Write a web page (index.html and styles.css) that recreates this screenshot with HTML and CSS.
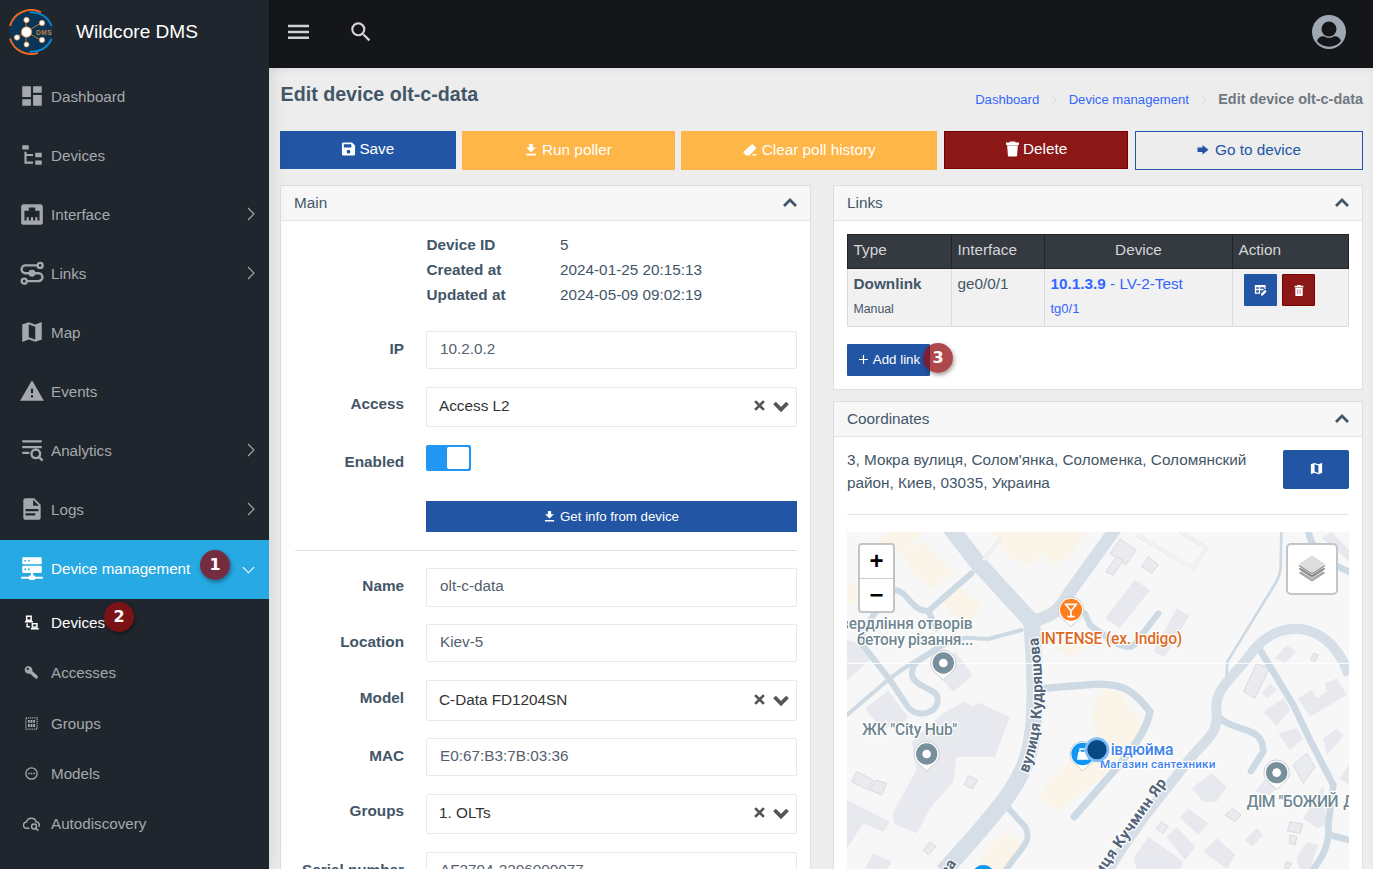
FILE: index.html
```html
<!DOCTYPE html>
<html lang="en">
<head>
<meta charset="utf-8">
<title>Wildcore DMS</title>
<link rel="stylesheet" href="styles.css">
</head>
<body>
<svg class="defs" width="0" height="0">
  <symbol id="dash" viewBox="0 0 24 24"><path d="M3 13h8V3H3v10zm0 8h8v-6H3v6zm10 0h8V11h-8v10zm0-18v6h8V3h-8z"/></symbol>
  <symbol id="tree" viewBox="0 0 24 24"><path d="M3 3h6v4H3V3m12 7h6v4h-6v-4m0 7h6v4h-6v-4m-2-4H7v5h6v2H5V9h2v2h6v2z"/></symbol>
  <symbol id="eth" viewBox="0 0 24 24"><path d="M7 15h2v3h2v-3h2v3h2v-3h2v3h2V9h-4V6H9v3H5v9h2v-3M4.400 3h15.200A2.400 2.400 0 0 1 22 5.400v14.200a2.400 2.400 0 0 1-2.400 2.400H4.400A2.400 2.400 0 0 1 2 19.600V5.400A2.400 2.400 0 0 1 4.400 3z"/></symbol>
  <symbol id="route" viewBox="0 0 24 24"><g fill="none" stroke="currentColor" stroke-width="2.200"><path d="M17.500 5H6a3.200 3.200 0 0 0 0 7.200h12a3.600 3.600 0 0 1 0 7.300H6.500"/><circle cx="19.500" cy="5" r="2.300"/><circle cx="4.800" cy="19.500" r="2.300"/></g><circle cx="12" cy="12.200" r="3.200"/></symbol>
  <symbol id="map" viewBox="0 0 24 24"><path d="M20.500 3l-.16.03L15 5.100 9 3 3.360 4.900c-.21.07-.36.25-.36.48V20.500c0 .28.22.5.5.5l.16-.03L9 18.900l6 2.100 5.640-1.900c.21-.07.36-.25.36-.48V3.500c0-.28-.22-.5-.5-.5zM15 19l-6-2.110V5l6 2.110V19z"/></symbol>
  <symbol id="warn" viewBox="0 0 24 24"><path d="M1 21h22L12 2 1 21zm12-3h-2v-2h2v2zm0-4h-2v-4h2v4z"/></symbol>
  <symbol id="txtsearch" viewBox="0 0 24 24"><path d="M3 3h18v2H3zM3 8.300h18v2H3zM3 13.600h6.500v2H3z"/><g fill="none" stroke="currentColor" stroke-width="2.200"><circle cx="15.500" cy="15.500" r="4"/><path d="M18.300 18.300l3.500 3.500"/></g></symbol>
  <symbol id="doc" viewBox="0 0 24 24"><path d="M13 9h5.500L13 3.500V9M6 2h8l6 6v12a2 2 0 0 1-2 2H6a2 2 0 0 1-2-2V4c0-1.110.89-2 2-2m9 16v-2H6v2h9m3-4v-2H6v2h12z"/></symbol>
  <symbol id="server" viewBox="0 0 24 24"><path fill-rule="evenodd" d="M4 2h16a1 1 0 0 1 1 1v4.500a1 1 0 0 1-1 1H4a1 1 0 0 1-1-1V3a1 1 0 0 1 1-1zm1 2.500v1.500h1.500V4.500zm3.500 0v1.500H10V4.500zM4 10h16a1 1 0 0 1 1 1v4.500a1 1 0 0 1-1 1h-7V19h1a1 1 0 0 1 1 1h7v2h-7a1 1 0 0 1-1 1h-4a1 1 0 0 1-1-1H2v-2h7a1 1 0 0 1 1-1h1v-2.500H4a1 1 0 0 1-1-1V11a1 1 0 0 1 1-1zm1 2.500V14h1.500v-1.500zm3.500 0V14H10v-1.500z"/></symbol>
  <symbol id="pcs" viewBox="0 0 16 16"><g fill="none" stroke="currentColor" stroke-width="1.600"><rect x="2.800" y="1.300" width="4.800" height="4.300"/><path d="M1 7.200h8.500M3.300 9v3.400h3"/><rect x="8.900" y="9.300" width="4.900" height="3.600"/><path d="M7.300 14.700h8.500"/></g></symbol>
  <symbol id="key" viewBox="0 0 16 16"><path fill-rule="evenodd" d="M5 1.200a4 4 0 1 0 .9 7.800l1.100 1h1.400v1.400l1.200.3.300 1.200 1.500.3.300 1.300h2.900v-2.700L8.800 6.300A4 4 0 0 0 5 1.200zM4 3a1.200 1.200 0 1 1 0 2.400A1.200 1.200 0 0 1 4 3z"/></symbol>
  <symbol id="grp" viewBox="0 0 16 16"><path fill="none" stroke="currentColor" stroke-width="1.300" stroke-dasharray="1.300 .9" d="M2 2h12v12H2z"/><path d="M4.200 4.200h2v3h-2zM7 4.200h2v3H7zM9.800 4.200h2v3h-2zM4.200 8.600h2v3h-2zM7 8.600h2v3H7zM9.800 8.600h2v3h-2z"/></symbol>
  <symbol id="dots" viewBox="0 0 16 16"><circle cx="8" cy="8" r="6" fill="none" stroke="currentColor" stroke-width="1.400"/><path d="M4.500 7.200h1.600v1.600H4.500zM7.200 7.200h1.600v1.600H7.200zM9.900 7.200h1.600v1.600H9.900z"/></symbol>
  <symbol id="cloud" viewBox="0 0 16 16"><g fill="none" stroke="currentColor" stroke-width="1.400"><path d="M6 12.500H3.600a3 3 0 0 1-.3-6A4.700 4.700 0 0 1 12.400 6.600 2.700 2.700 0 0 1 14.700 11"/><circle cx="10.400" cy="10.800" r="2.300"/><path d="M12.200 12.600l2.200 2.200"/></g></symbol>
  <symbol id="search" viewBox="0 0 24 24"><path d="M9.500 3A6.500 6.500 0 0 1 16 9.500c0 1.610-.59 3.090-1.560 4.230l.27.27h.79l5 5-1.500 1.500-5-5v-.79l-.27-.27A6.516 6.516 0 0 1 9.500 16 6.500 6.500 0 0 1 3 9.500 6.500 6.500 0 0 1 9.500 3m0 2C7 5 5 7 5 9.500S7 14 9.500 14 14 12 14 9.500 12 5 9.500 5z"/></symbol>
  <symbol id="right" viewBox="0 0 8 14"><path fill="none" stroke="currentColor" stroke-width="1.100" d="M1 1l6 6-6 6"/></symbol>
  <symbol id="down" viewBox="0 0 14 8"><path fill="none" stroke="currentColor" stroke-width="1.200" d="M1 1l6 6 6-6"/></symbol>
  <symbol id="up" viewBox="0 0 14 9"><path fill="none" stroke="currentColor" stroke-width="2.700" d="M1 8l6-6 6 6"/></symbol>
  <symbol id="chev" viewBox="0 0 16 12"><path fill="none" stroke="currentColor" stroke-width="3.800" d="M1.500 2L8 8.500 14.500 2"/></symbol>
  <symbol id="x" viewBox="0 0 12 12"><path fill="none" stroke="currentColor" stroke-width="2.900" d="M1.200 1.200l9.600 9.600M10.800 1.200l-9.600 9.600"/></symbol>
  <symbol id="save" viewBox="0 0 16 16"><path fill-rule="evenodd" d="M2.500 1h9.300L15 4.200v9.300a1.500 1.500 0 0 1-1.500 1.500h-11A1.500 1.500 0 0 1 1 13.500v-11A1.500 1.500 0 0 1 2.500 1zM3 3v3.300h8V3zm5 5.800a2 2 0 1 0 0 4 2 2 0 0 0 0-4z"/></symbol>
  <symbol id="dl" viewBox="0 0 12 12"><path d="M4.200 0h3.600v3.600h3L6 8.200 1.200 3.600h3zM1 9.800h10v1.700H1z"/></symbol>
  <symbol id="eraser" viewBox="0 0 14 12"><path d="M8.300.7a1.300 1.300 0 0 1 1.800 0l2.600 2.600a1.300 1.300 0 0 1 0 1.800L7.500 10.200 6.300 11.400H3L.8 9.200a1.300 1.300 0 0 1 0-1.800zM10 9.900h3.500v1.500H8.500z"/></symbol>
  <symbol id="trash" viewBox="0 0 14 16"><path d="M4.500.5h5l.7 1H13.500v2.400H.5V1.500h3.300zM1.700 5h10.600l-.7 9.500a1 1 0 0 1-1 1H3.400a1 1 0 0 1-1-1z"/><path opacity=".7" d="M1.500 3.900h11V5h-11z"/></symbol>
  <symbol id="arrow" viewBox="0 0 12 10"><path d="M.5 2.500h5V0l6 4.800-6 4.800V7.100h-5z"/></symbol>
</svg>
<div class="app">
  <aside class="side">
    <div class="brand">
      <svg class="logo" viewBox="0 0 46 46">
        <circle cx="23" cy="23" r="21.500" fill="#0b3556"/>
        <g fill="none" stroke-width="1.900"><path stroke="#f26a1b" d="M2 17A21.800 21.800 0 0 1 33 3.400M2 29.500A21.800 21.800 0 0 0 30 43.800"/><path stroke="#0d86cf" d="M22 3.500A20.500 20.500 0 0 1 43.600 17M43.600 30A21 21 0 0 1 22 42.500"/></g>
        <path stroke="#d98a35" stroke-width=".8" fill="none" d="M18 23V11M18 23l15-9M18 23l-10 5.500M18 23v12M18 23l15 8"/>
        <g fill="#fff" stroke="#e88a30" stroke-width=".7"><circle cx="18.500" cy="23" r="5.200"/><circle cx="18.500" cy="11" r="2.700"/><circle cx="34" cy="14" r="2.700"/><circle cx="9" cy="28.500" r="2.700"/><circle cx="18.500" cy="35.500" r="2.500"/><circle cx="34" cy="31" r="2.700"/></g>
        <text class="logo-txt" x="28" y="25.500">DMS</text>
      </svg>
      <span class="brand-name">Wildcore DMS</span>
    </div>
    <nav>
      <a class="item"><svg class="ico"><use href="#dash"/></svg>Dashboard</a>
      <a class="item"><svg class="ico"><use href="#tree"/></svg>Devices</a>
      <a class="item"><svg class="ico"><use href="#eth"/></svg>Interface<svg class="more"><use href="#right"/></svg></a>
      <a class="item"><svg class="ico"><use href="#route"/></svg>Links<svg class="more"><use href="#right"/></svg></a>
      <a class="item"><svg class="ico"><use href="#map"/></svg>Map</a>
      <a class="item"><svg class="ico"><use href="#warn"/></svg>Events</a>
      <a class="item"><svg class="ico"><use href="#txtsearch"/></svg>Analytics<svg class="more"><use href="#right"/></svg></a>
      <a class="item"><svg class="ico"><use href="#doc"/></svg>Logs<svg class="more"><use href="#right"/></svg></a>
      <a class="item active"><svg class="ico"><use href="#server"/></svg>Device management<svg class="more-down"><use href="#down"/></svg><b class="badge b1">1</b></a>
      <div class="sub">
        <a class="subitem current"><svg class="sico"><use href="#pcs"/></svg>Devices<b class="badge b2">2</b></a>
        <a class="subitem"><svg class="sico"><use href="#key"/></svg>Accesses</a>
        <a class="subitem"><svg class="sico"><use href="#grp"/></svg>Groups</a>
        <a class="subitem"><svg class="sico"><use href="#dots"/></svg>Models</a>
        <a class="subitem"><svg class="sico wide"><use href="#cloud"/></svg>Autodiscovery</a>
      </div>
    </nav>
  </aside>
  <div class="page">
    <header class="top">
      <svg class="burger" viewBox="0 0 21 16"><path d="M0 .8h21v2.500H0zM0 6.700h21v2.500H0zM0 12.600h21v2.500H0z"/></svg>
      <svg class="find"><use href="#search"/></svg>
      <svg class="user" viewBox="0 0 34 34"><circle cx="17" cy="17" r="17" fill="#a0a8b3"/><circle cx="17" cy="14" r="7.500" fill="#15161a"/><path fill="#15161a" d="M5 26c1-3.500 4-5.200 7-4.800 3.500 2.200 6.500 2.200 10 0 3-.4 6 1.300 7 4.800-5.500 7.600-18.500 7.600-24 0z"/></svg>
    </header>
    <main class="main">
      <div class="heading">
        <h1>Edit device olt-c-data</h1>
        <div class="crumbs"><a>Dashboard</a><svg class="sep"><use href="#right"/></svg><a>Device management</a><svg class="sep"><use href="#right"/></svg><b>Edit device olt-c-data</b></div>
      </div>
      <div class="actions">
        <button class="btn blue short"><svg class="i16"><use href="#save"/></svg>Save</button>
        <button class="btn amber"><svg class="i12"><use href="#dl"/></svg>Run poller</button>
        <button class="btn amber"><svg class="i14"><use href="#eraser"/></svg>Clear poll history</button>
        <button class="btn red short"><svg class="i16"><use href="#trash"/></svg>Delete</button>
        <button class="btn outline"><svg class="i12"><use href="#arrow"/></svg>Go to device</button>
      </div>
      <div class="cols">
        <section class="panel">
          <div class="phead">Main<svg class="fold"><use href="#up"/></svg></div>
          <div class="form">
            <dl class="info"><dt>Device ID</dt><dd>5</dd><dt>Created at</dt><dd>2024-01-25 20:15:13</dd><dt>Updated at</dt><dd>2024-05-09 09:02:19</dd></dl>
            <div class="row"><label>IP</label><div class="input">10.2.0.2</div></div>
            <div class="row"><label class="high">Access</label><div class="select">Access L2<svg class="clear"><use href="#x"/></svg><svg class="caret"><use href="#chev"/></svg></div></div>
            <div class="row"><label class="high">Enabled</label><div class="toggle"><i></i></div></div>
            <div class="row get"><span></span><button class="btn blue small"><svg class="i11"><use href="#dl"/></svg>Get info from device</button></div>
            <hr>
            <div class="row"><label>Name</label><div class="input tall">olt-c-data</div></div>
            <div class="row snug"><label>Location</label><div class="input">Kiev-5</div></div>
            <div class="row"><label>Model</label><div class="select tall">C-Data FD1204SN<svg class="clear"><use href="#x"/></svg><svg class="caret"><use href="#chev"/></svg></div></div>
            <div class="row snug"><label>MAC</label><div class="input">E0:67:B3:7B:03:36</div></div>
            <div class="row"><label class="high">Groups</label><div class="select">1. OLTs<svg class="clear"><use href="#x"/></svg><svg class="caret"><use href="#chev"/></svg></div></div>
            <div class="row"><label>Serial number</label><div class="input">AF2704-2206000077</div></div>
          </div>
        </section>
        <div class="right">
          <section class="panel">
            <div class="phead">Links<svg class="fold"><use href="#up"/></svg></div>
            <div class="links">
              <table>
                <colgroup><col class="c1"><col class="c2"><col class="c3"><col class="c4"></colgroup>
                <thead><tr><th>Type</th><th>Interface</th><th class="mid">Device</th><th>Action</th></tr></thead>
                <tbody><tr>
                  <td><b>Downlink</b><br><small>Manual</small></td>
                  <td>ge0/0/1</td>
                  <td><a><b>10.1.3.9</b> - LV-2-Test</a><br><small><a>tg0/1</a></small></td>
                  <td><div class="acts">
                    <span class="sq"><svg width="13" height="12" viewBox="0 0 13 12"><g fill="none" stroke="#fff" stroke-width="1.300"><path d="M11 5V1.700H1.500v7.500H6M1.500 5.500h8M5.500 2v7M1.500 2.500H11"/></g><path fill="#fff" d="M7 11.500V9.700l4-4 1.700 1.700-4 4z"/></svg></span>
                    <span class="sq del"><svg width="10" height="11" viewBox="0 0 10 11"><path fill="#fff" d="M3.500 0h3l.5.700h2.300v1.800H.7V.7H3zM1.300 3h7.400v7.200a.8.800 0 0 1-.8.800H2.100a.8.800 0 0 1-.8-.8z"/><path stroke="#b66" stroke-width=".8" d="M3.800 4.200v5M6.200 4.200v5"/></svg></span>
                  </div></td>
                </tr></tbody>
              </table>
              <button class="btn blue add"><svg width="9" height="9" viewBox="0 0 9 9"><path stroke="#fff" stroke-width="1.200" d="M4.500 0v9M0 4.500h9"/></svg>Add link<b class="badge b3">3</b></button>
            </div>
          </section>
          <section class="panel coord">
            <div class="phead">Coordinates<svg class="fold"><use href="#up"/></svg></div>
            <div class="coords">
              <div class="addr"><p>3, Мокра вулиця, Солом'янка, Соломенка, Соломянский район, Киев, 03035, Украина</p><span class="mapbtn"><svg class="i14s"><use href="#map"/></svg></span></div>
              <div class="map">
                <svg class="tiles" viewBox="21 21 1506 1011" preserveAspectRatio="none">
                  <defs><g id="pin"><path fill="#fff" stroke="#c8cdd2" stroke-width="3" d="M0-38A38 38 0 0 0-38 0C-38 18-28 26-18 34L0 51 18 34C28 26 38 18 38 0A38 38 0 0 0 0-38z"/></g><g id="place"><use href="#pin"/><circle r="32" fill="#78909c"/><circle r="13" fill="#fff"/></g></defs>
                  <rect x="21" y="21" width="1506" height="1011" fill="#f7f7f7"/>
                  <!-- buildings: commercial -->
                  <g fill="#faf5e8"><path d="M100 60L150 21H250L200 65L255 55L340 140L275 190L215 140L190 85L140 75z"/><path d="M450 21H735L690 95L640 122L610 85L560 122L500 90z"/><path d="M305 210L350 175L425 240L400 285L330 270z"/><path d="M21 160L60 200L40 235H21z"/><path d="M610 790L700 700L760 690L790 700L860 640L850 700L780 760L655 860L600 820z"/><path d="M757 560L765 520L800 490L850 510L860 545L905 580L890 640L850 675L770 710z"/><path d="M500 920L545 960L500 1032H405L440 975z"/><path d="M640 370L700 330L750 360L690 395z"/></g>
                  <!-- buildings: residential -->
                  <g fill="#e8e9ee"><path d="M21 345L70 360L90 405L21 465z"/><path d="M345 380L398 450L340 500L285 440z"/><path d="M75 550L145 497L205 575L175 610L150 600L130 620z"/><path d="M160 860L230 735L215 650L310 565L370 530L400 545L415 533L510 575L465 695H350L340 770L270 850L230 925L160 895z"/><path d="M21 825L150 890L130 920L70 895L21 970z"/><path d="M100 985L155 1010L140 1032H75z"/><path d="M795 280L885 165L930 195L840 310z"/><path d="M940 380L1010 250L1048 272L975 395z"/><path d="M1055 790L1115 745L1160 785L1130 830L1090 830z"/><path d="M1020 880L1045 850L1105 895L1075 930z"/><path d="M880 1000L925 935L1030 1010L1020 1032H890z"/><path d="M980 935L1010 905L1065 965L1035 1005z"/><path d="M1090 980L1130 940L1187 990L1160 1032z"/><path d="M1215 945L1250 910L1270 930L1235 965z"/><path d="M1270 560L1330 520L1352 555L1310 602z"/><path d="M1315 625L1370 610L1390 640L1350 675z"/><path d="M1265 505L1290 475L1310 495L1280 520z"/><path d="M1373 520L1415 495L1430 520L1460 500L1455 475L1490 460L1520 510L1410 575z"/><path d="M1450 640L1490 610L1510 630L1480 670L1460 690z"/><path d="M1390 880L1450 780L1460 900L1430 910z"/><path d="M1370 1000L1400 950L1435 960L1410 1032H1380z"/><path d="M1245 800L1290 745L1335 760L1290 810z"/><path d="M1305 400L1340 360L1370 380L1335 415z"/><path d="M1445 40L1475 21L1527 75V108z"/><path d="M1497 760L1527 720V780z"/></g>
                  <g fill="#e9ebee" stroke="#d9dbe4" stroke-width="3"><path d="M50 740L100 765L85 795L35 770z"/><path d="M108 765L140 775L125 810L90 795z"/><path d="M385 752L412 765L398 792L372 780z"/><path d="M270 950L288 965L265 990L250 975z"/><path d="M840 42L888 75L858 120L810 85z"/><path d="M830 95L850 105L820 150L797 140z"/><path d="M925 95L955 120L935 145L905 125z"/><path d="M1250 415L1288 430L1245 520L1210 500z"/><path d="M1360 720L1400 685L1425 725L1390 775z"/><path d="M1178 850L1203 870L1185 890L1155 870z"/><path d="M965 890L985 905L968 925L948 910z"/><path d="M1350 890L1388 897L1380 925L1342 918z"/><path d="M1350 930L1370 935L1365 960L1348 955z"/><path d="M1420 385L1435 390L1425 410L1413 405z"/><path d="M1340 1010L1355 1015L1345 1032L1333 1030z"/></g>
                  <!-- streets -->
                  <g fill="none" stroke="#cdd9e3" stroke-linecap="round" stroke-linejoin="round">
                    <path stroke-width="18" d="M155 195C205 190 210 260 265 258L395 145M265 258L290 310M110 255L75 310L60 350L150 465L200 540C230 590 310 560 290 510C265 480 190 480 225 415L320 350"/>
                    <path stroke-width="12" d="M545 315L445 342L380 338C330 345 230 400 150 460L21 570"/>
                    <path stroke-width="18" d="M505 850L555 905C580 950 540 970 500 1032M955 265L890 350C870 385 830 360 750 300L735 265"/>
                    <path stroke-width="8" d="M1324 21L1322 130C1320 150 1310 170 1300 185L1162 410L1160 450"/>
                    <path stroke-width="22" d="M612 490L760 478C860 472 890 510 930 560C920 620 870 680 820 740L703 875"/>
                    <path stroke-width="20" d="M1262 378L1360 540L1410 645L1480 780L1465 900C1470 960 1445 1000 1420 1032M1470 930L1527 945M1140 580C1190 625 1270 600 1270 680L1233 738M1405 21C1420 90 1480 120 1527 140"/>
                  </g>
                  <g fill="none" stroke="#d6dfe7" stroke-linejoin="round"><path stroke-width="50" d="M325 0L410 110L575 290C585 440 590 560 575 640C560 780 440 890 310 1040"/><path stroke-width="38" d="M575 290C650 270 660 250 690 200L835 0"/><path stroke-width="30" d="M785 1070C860 940 940 840 1020 740C1090 640 1135 640 1130 560C1120 490 1180 460 1245 370C1330 275 1470 290 1527 450"/></g>
                  <g fill="none" stroke="#e4e6ea" stroke-width="10"><path d="M430 105L485 38"/><path d="M890 30L1060 130L1100 70L1015 15"/></g>
                  <g fill="none" stroke="#f7f7f7" stroke-width="5"><path d="M430 105L485 38"/><path d="M890 30L1060 130L1100 70L1015 15"/></g>
                  <path stroke="#fff" stroke-width="3" d="M21 415H1527"/>
                  <g class="lbl gray"><text x="0" y="312" textLength="398">вердління отворів</text><text x="50" y="359" textLength="350">бетону різання...</text><text x="66" y="631" textLength="286">ЖК "City Hub"</text><text x="1220" y="845" textLength="276">ДІМ "БОЖИЙ</text><text x="1510" y="845">Д</text></g>
                  <text class="lbl orange" x="602" y="356" textLength="425">INTENSE (ex. Indigo)</text>
                  <g class="lbl road"><path id="r1" fill="none" stroke="none" d="M564 745C606 640 620 520 594 330"/><text textLength="414"><textPath href="#r1">вулиця Кудряшова</textPath></text><text transform="translate(740 1117) rotate(-55)" textLength="420">вулиця Кучмин Яр</text><text transform="translate(318 1062) rotate(-55)" x="-20">ова</text></g>
                  <use href="#place" x="310" y="414"/><use href="#place" x="260" y="687"/><use href="#place" x="1310" y="743"/>
                  <use href="#pin" x="693" y="254"/><circle cx="693" cy="254" r="33" fill="#ff7f1f"/><path fill="none" stroke="#fff" stroke-width="5" d="M677 238H709L693 258zM693 258V275M682 275H704"/>
                  <use href="#pin" x="728" y="687"/><circle cx="728" cy="687" r="34" fill="#1196f5"/><path fill="#fff" d="M715 680H742L746 704H711z"/><path fill="none" stroke="#fff" stroke-width="4" d="M720 682V672H736V682"/>
                  <circle cx="430" cy="1055" r="35" fill="#1196f5"/>
                  <text class="lbl azure" x="812" y="690" textLength="188">івдюйма</text><text class="lbl azure sm" x="780" y="729" textLength="346">Магазин сантехники</text>
                  <circle cx="771" cy="674" r="33" fill="#054a82" stroke="#7fbdf7" stroke-width="8"/>
                </svg>
                <div class="zoomer"><span>+</span><span>−</span></div>
                <div class="layers"><svg width="30" height="28" viewBox="0 0 30 28"><g stroke="#fff" stroke-width=".7"><path fill="#aaa" d="M1 18l14-8 14 8-14 9z"/><path fill="#888" d="M1 14l14-8 14 8-14 9z"/><path fill="#777" d="M1 11l14-8 14 8-14 8.500z"/></g><path fill="#ddd" d="M1 9.500L15 .5l14 9-14 8.800z"/></svg></div>
              </div>
            </div>
          </section>
        </div>
      </div>
    </main>
  </div>
</div>
</body>
</html>
```
FILE: styles.css
```css
* { box-sizing: border-box; }
body { margin: 0; font: 15.3px/23px "Liberation Sans", Arial, sans-serif; color: #435668; background: #ededed; }
svg { fill: currentColor; flex: none; display: block; }
.defs { position: absolute; }
.app { display: flex; height: 869px; overflow: hidden; }
.side { width: 269px; flex: none; background: #20262d; color: #a5a9ad; position: relative; z-index: 2; box-shadow: 0 0 20px rgba(0,0,0,.12); font-size: 15.2px; }
.brand { height: 68px; display: flex; align-items: center; padding: 0 0 4px 8px; border-bottom: 1px solid #1e242b; }
.logo { width: 46px; height: 46px; }
.logo-txt { font: bold 6.6px "Liberation Sans", sans-serif; fill: #c57b35; letter-spacing: .5px; }
.brand-name { font-size: 19.100px; color: #fff; margin-left: 22px; }
.item { height: 59px; display: flex; align-items: center; padding: 0 14px 2px 18px; position: relative; line-height: 20px; }
.ico { width: 26px; height: 26px; margin: 0 6.500px 2px .5px; }
.more { width: 8px; height: 14px; margin: 0 0 2px auto; }
.more-down { width: 13px; height: 8px; margin: 3px 0 0 auto; }
.active { background: #27a9e3; color: #fff; }
.subitem { height: 50.400px; display: flex; align-items: center; padding: 1px 0 0 24px; position: relative; }
.subitem:first-child { height: 47px; padding-top: 0; margin-bottom: 1px; }
.sico { width: 15px; height: 15px; margin-right: 12px; }
.sico.wide { width: 17px; height: 17px; margin: 0 11px 0 -1px; }
.current { color: #fff; }
.badge { position: absolute; width: 30px; height: 30px; border-radius: 50%; background: rgba(139,10,16,.78); color: #fff; font: bold 16px/29px "DejaVu Sans", sans-serif; text-align: center; box-shadow: 1px 2px 4px rgba(0,0,0,.4); }
.b1 { left: 200px; top: 10px; }
.b2 { left: 104px; top: 3px; background: #7b1316; }
.b3 { left: 76px; top: -1px; background: rgba(150,14,18,.76); }

.page { flex: 1; min-width: 0; }
.top { height: 68px; background: #15161a; display: flex; align-items: center; padding: 0 27px 4px 19px; }
.burger { width: 21px; height: 16px; color: #d0d1d2; }
.find { width: 26px; height: 26px; color: #d3d4d6; margin-left: 39px; }
.user { width: 34px; height: 34px; margin-left: auto; }
.main { padding: 0 10px 0 11px; box-shadow: inset 0 5px 8px -5px rgba(0,0,0,.1); }
.heading { height: 63px; display: flex; justify-content: space-between; }
h1 { margin: 0; padding: 15px 0 0 .6px; font-size: 19.650px; line-height: 23px; }
.crumbs { display: flex; align-items: center; font-size: 13.120px; height: 23px; margin-top: 20px; }
.crumbs b { font-size: 14.400px; color: #6f7780; }
a { color: inherit; }
.crumbs a, td a { color: #3366ff; }
.sep { width: 7px; height: 12px; margin: 0 11.200px; color: #d4d8db; }
.actions { display: grid; grid-template-columns: 175.700px 212.500px 256.200px 184.600px 228px; column-gap: 6.500px; height: 54px; align-items: start; }
.btn { border: 0; margin: 0; padding: 0 0 2px; font: inherit; color: #fff; height: 39px; display: flex; align-items: center; justify-content: center; position: relative; }
.short { height: 38px; padding-bottom: 3px; gap: 3px; }
.blue { background: #2255a4; }
.amber { background: #ffb648; gap: 5px; }
.red { background: #8b1717; border: 1px solid #7a0000; }
.outline { background: none; border: 1px solid #2255a4; color: #2255a4; gap: 6px; }
.i16 { width: 15px; height: 16px; }
.i14 { width: 14px; height: 12px; }
.i12 { width: 12px; height: 12px; }
.i11 { width: 11px; height: 11px; }
.cols { display: grid; grid-template-columns: 531px 530px; column-gap: 22px; }
.panel { background: #fff; border: 1px solid #dfdfdf; }
.phead { height: 35px; background: #f7f7f7; border-bottom: 1px solid #e3e3e3; padding: 0 13px 2px; display: flex; align-items: center; justify-content: space-between; }
.fold { width: 14px; height: 9px; }
.form { height: 700px; padding: 10.500px 13px 0 14px; }
.info { margin: 0 0 24.500px 131.500px; display: grid; grid-template-columns: 133.500px 1fr; line-height: 25px; }
dt { font-weight: bold; }
dd { margin: 0; }
.row { display: grid; grid-template-columns: 109px 371px; column-gap: 22px; align-items: start; margin-bottom: 18px; }
.row.snug { margin-top: -1px; }
label { font-weight: bold; text-align: right; line-height: 36px; white-space: nowrap; }
label.high { line-height: 34px; }
.input, .select { height: 38px; border: 1px solid #e6e9ec; border-radius: 2px; padding: 0 13px; line-height: 34px; color: #55606e; }
.input.tall { height: 39px; }
.select { height: 40px; color: #333; padding: 0 7px 2px 12px; display: flex; align-items: center; }
.select.tall { height: 41px; }
.clear { width: 11px; height: 11px; margin: 0 8.500px 1px auto; color: #555; }
.caret { width: 16px; height: 12px; color: #555; margin-top: 2px; }
.toggle { width: 45px; height: 26px; background: #2196f3; border-radius: 2px; padding: 2px 1px 2px 21px; }
.toggle i { display: block; width: 22px; height: 22px; background: #fff; border-radius: 2px; }
.get { margin-top: 22px; }
.small { height: 31px; font-size: 13.300px; gap: 5px; padding: 0; }
hr { border: 0; border-top: 1px solid #dfe2e4; margin: 0 0 17px; }
.links { height: 168px; padding: 13px; }
table { width: 501px; table-layout: fixed; border-collapse: collapse; }
.c1 { width: 104px; } .c2 { width: 93px; } .c3 { width: 188px; } .c4 { width: 116px; }
th { height: 34px; padding: 0 5.500px 4px; background: #343a40; color: #d5d7d9; font-weight: normal; text-align: left; border: 1px solid #212529; }
th.mid { text-align: center; }
td { height: 58px; padding: 3px 5.500px 0; vertical-align: top; background: #f1f1f1; border: 1px solid #d9dcdf; line-height: 24px; }
small { font-size: 12.300px; }
td small a { font-size: 13px; }
.acts { display: flex; gap: 5px; padding: 2px 5.500px; }
.sq { width: 33px; height: 32px; background: #2255a4; border-radius: 1px; display: grid; place-items: center; }
.sq.del { background: #8b1717; border: 1px solid #7a0000; }
.add { margin-top: 17px; width: 83px; height: 32px; font-size: 13.300px; gap: 5px; border-radius: 1px; padding: 0 0 2px 2px; }
.coord { margin-top: 11px; }
.coords { padding: 13px; }
.addr { height: 65px; border-bottom: 1px solid #e1e3e5; display: flex; justify-content: space-between; }
.addr p { margin: -2px 0 0; width: 420px; }
.mapbtn { width: 66px; height: 39px; background: #2255a4; color: #fff; border-radius: 2px; display: grid; place-items: center; padding-bottom: 2px; }
.i14s { width: 15px; height: 15px; }
.map { position: relative; margin-top: 17px; width: 502px; height: 337px; overflow: hidden; }
.tiles { width: 502px; height: 337px; }
.lbl { font: 500 47px Roboto, sans-serif; paint-order: stroke; stroke: #fff; stroke-width: 7px; stroke-linejoin: round; }
.gray { fill: #6f8791; }
.orange { fill: #dd6a1f; }
.azure { fill: #3f82ee; }
.lbl.sm { font-size: 35px; }
.road { font-weight: 700; font-size: 46px; fill: #54657a; }
.zoomer { position: absolute; left: 11px; top: 11px; width: 37px; height: 70px; border: 2px solid #c4c4c4; border-radius: 4px; background: #fff; color: #000; font: bold 24px/32px "Liberation Sans", sans-serif; text-align: center; }
.zoomer span { display: block; height: 33px; }
.zoomer span + span { border-top: 1px solid #ccc; }
.layers { position: absolute; right: 11px; top: 11px; width: 52px; height: 52px; border: 2px solid #c4c4c4; border-radius: 5px; background: #fff; display: grid; place-items: center; }
```
